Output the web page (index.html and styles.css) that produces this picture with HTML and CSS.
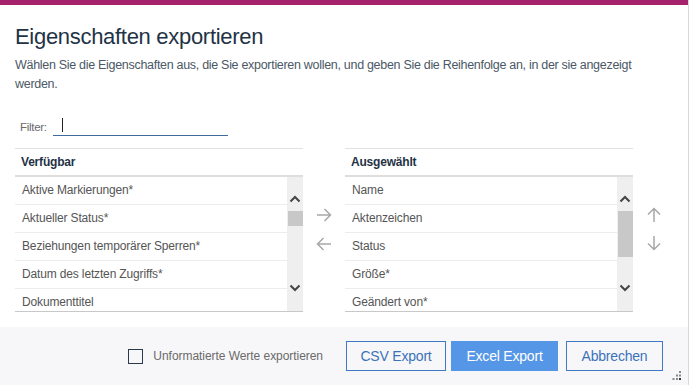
FILE: index.html
```html
<!DOCTYPE html>
<html lang="de">
<head>
    <meta charset="UTF-8">
    <meta name="viewport" content="width=device-width, initial-scale=1.0">
    <title>Eigenschaften exportieren</title>
    <link rel="stylesheet" href="styles.css">
</head>
<body>
    <div class="dialog">
        <div class="topbar"></div>

        <div class="content">
            <h1>Eigenschaften exportieren</h1>
            <p class="intro">Wählen Sie die Eigenschaften aus, die Sie exportieren wollen, und geben Sie die Reihenfolge an, in der sie angezeigt werden.</p>

            <div class="filter">
                <label for="filterInput">Filter:</label>
                <div class="filter-field">
                    <span class="caret"></span>
                    <input id="filterInput" type="text">
                </div>
            </div>

            <div class="picker">
                <div class="list">
                    <div class="list-head">Verfügbar</div>
                    <div class="list-body">
                        <div class="rows">
                            <div class="row">Aktive Markierungen*</div>
                            <div class="row">Aktueller Status*</div>
                            <div class="row">Beziehungen temporärer Sperren*</div>
                            <div class="row">Datum des letzten Zugriffs*</div>
                            <div class="row">Dokumenttitel</div>
                        </div>
                        <div class="scrollbar">
                            <svg class="chev" width="12" height="8" viewBox="0 0 12 8"><path d="M1.5 6.5 L6 2 L10.5 6.5" fill="none" stroke="#444" stroke-width="2"/></svg>
                            <div class="track">
                                <div class="thumb thumb-short"></div>
                            </div>
                            <svg class="chev" width="12" height="8" viewBox="0 0 12 8"><path d="M1.5 1.5 L6 6 L10.5 1.5" fill="none" stroke="#444" stroke-width="2"/></svg>
                        </div>
                    </div>
                </div>

                <div class="movers">
                    <svg width="16" height="14" viewBox="0 0 16 14"><path d="M1 7 H14.5 M8.5 1 L14.5 7 L8.5 13" fill="none" stroke="#a8a8a8" stroke-width="1.5"/></svg>
                    <svg width="16" height="14" viewBox="0 0 16 14"><path d="M15 7 H1.5 M7.5 1 L1.5 7 L7.5 13" fill="none" stroke="#a8a8a8" stroke-width="1.5"/></svg>
                </div>

                <div class="list">
                    <div class="list-head">Ausgewählt</div>
                    <div class="list-body">
                        <div class="rows">
                            <div class="row">Name</div>
                            <div class="row">Aktenzeichen</div>
                            <div class="row">Status</div>
                            <div class="row">Größe*</div>
                            <div class="row">Geändert von*</div>
                        </div>
                        <div class="scrollbar">
                            <svg class="chev" width="12" height="8" viewBox="0 0 12 8"><path d="M1.5 6.5 L6 2 L10.5 6.5" fill="none" stroke="#444" stroke-width="2"/></svg>
                            <div class="track">
                                <div class="thumb thumb-long"></div>
                            </div>
                            <svg class="chev" width="12" height="8" viewBox="0 0 12 8"><path d="M1.5 1.5 L6 6 L10.5 1.5" fill="none" stroke="#444" stroke-width="2"/></svg>
                        </div>
                    </div>
                </div>

                <div class="movers order">
                    <svg width="16" height="16" viewBox="0 0 16 16"><path d="M8 15 V1.5 M2 7.5 L8 1.5 L14 7.5" fill="none" stroke="#a8a8a8" stroke-width="1.5"/></svg>
                    <svg width="16" height="16" viewBox="0 0 16 16"><path d="M8 1 V14.5 M2 8.5 L8 14.5 L14 8.5" fill="none" stroke="#a8a8a8" stroke-width="1.5"/></svg>
                </div>
            </div>
        </div>

        <div class="footer">
            <label class="check">
                <span class="box"></span>
                Unformatierte Werte exportieren
            </label>
            <button class="btn">CSV Export</button>
            <button class="btn primary">Excel Export</button>
            <button class="btn cancel">Abbrechen</button>
            <div class="grip">
                <svg width="10" height="10" viewBox="0 0 10 10" fill="#888">
                    <rect x="7" y="0" width="2" height="2"/>
                    <rect x="4" y="3.5" width="2" height="2"/><rect x="7" y="3.5" width="2" height="2"/>
                    <rect x="0.5" y="7" width="2" height="2"/><rect x="4" y="7" width="2" height="2"/><rect x="7" y="7" width="2" height="2" fill="#333"/>
                </svg>
            </div>
        </div>
    </div>
</body>
</html>
```

FILE: styles.css
```css
body {
    margin: 0;
    font-family: 'Liberation Sans', Arial, sans-serif;
    background: #fff;
    color: #323c46;
}

.dialog {
    width: 688px;
    height: 385px;
    border-right: 1px solid #d8d8d8;
    display: flex;
    flex-direction: column;
    position: relative;
}

.topbar {
    height: 5px;
    background: #a7226c;
}

.content {
    padding: 0 15px;
    flex: 1;
}

h1 {
    margin: 18px 0 0;
    font-size: 22px;
    font-weight: normal;
    letter-spacing: -0.3px;
    color: #1f3346;
    line-height: 28px;
}

.intro {
    margin: 5px 0 0;
    padding-right: 30px;
    font-size: 12.5px;
    letter-spacing: -0.3px;
    line-height: 19px;
    color: #4b5866;
}

.filter {
    display: flex;
    align-items: flex-end;
    margin-top: 22px;
    padding-left: 5px;
}

.filter label {
    font-size: 11.5px;
    letter-spacing: -0.3px;
    color: #6a6a6a;
    margin-right: 6px;
    line-height: 14px;
    padding-bottom: 2px;
}

.filter-field {
    position: relative;
    width: 175px;
    border-bottom: 1px solid #3e6c9c;
}

.filter-field input {
    border: none;
    outline: none;
    width: 100%;
    height: 18px;
    padding: 0;
    background: transparent;
}

.caret {
    position: absolute;
    left: 9px;
    top: 2px;
    width: 1px;
    height: 14px;
    background: #222;
}

.picker {
    display: grid;
    grid-template-columns: 288px 42px 288px 42px;
    margin-top: 12px;
}

.list-head {
    border-top: 1px solid #e2e2e2;
    border-bottom: 2px solid #dedede;
    height: 26px;
    line-height: 26px;
    padding-left: 6px;
    font-size: 12px;
    font-weight: bold;
    letter-spacing: -0.2px;
    color: #1f3346;
}

.list-body {
    display: flex;
    height: 134px;
    overflow: hidden;
    border-bottom: 1px solid #c8c8c8;
}

.rows {
    flex: 1;
}

.row {
    height: 27px;
    line-height: 27px;
    border-bottom: 1px solid #ececec;
    padding-left: 7px;
    font-size: 12px;
    letter-spacing: -0.15px;
    color: #555;
}

.scrollbar {
    width: 16px;
    background: #efefef;
    display: flex;
    flex-direction: column;
    align-items: center;
    padding-top: 18px;
    box-sizing: border-box;
}

.chev {
    display: block;
}

.track {
    width: 15px;
    height: 73px;
    padding-top: 8px;
    margin-left: 1px;
}

.thumb {
    background: #c8c8c8;
    width: 100%;
}

.thumb-short {
    height: 15px;
}

.thumb-long {
    height: 46px;
}

.movers {
    display: flex;
    flex-direction: column;
    align-items: center;
    gap: 15px;
    padding-top: 60px;
}

.movers.order {
    padding-top: 59px;
    gap: 12px;
}

.footer {
    height: 58px;
    flex-shrink: 0;
    background: #f7f7f9;
    display: flex;
    align-items: center;
    justify-content: flex-end;
    padding: 0 25px 0 0;
    position: relative;
}

.check {
    display: flex;
    align-items: center;
    white-space: nowrap;
    flex-shrink: 0;
    font-size: 12px;
    letter-spacing: -0.05px;
    color: #6a6a6a;
    margin-right: 23px;
}

.box {
    width: 13px;
    height: 13px;
    border: 1.5px solid #2b3a4a;
    margin-right: 10px;
}

.btn {
    font-family: inherit;
    font-size: 14px;
    letter-spacing: -0.2px;
    height: 30px;
    padding: 0 10px;
    border: 1px solid #3f78c4;
    background: transparent;
    color: #3b73b9;
    margin-right: 5px;
    width: 100px;
    flex-shrink: 0;
}

.btn.primary {
    background: #5596e6;
    border-color: #5596e6;
    color: #fff;
    width: 107px;
    margin-right: 8px;
}

.btn.cancel {
    width: 97px;
    margin-right: 0;
}

.grip {
    position: absolute;
    right: 6px;
    bottom: 4px;
    line-height: 0;
}
```
